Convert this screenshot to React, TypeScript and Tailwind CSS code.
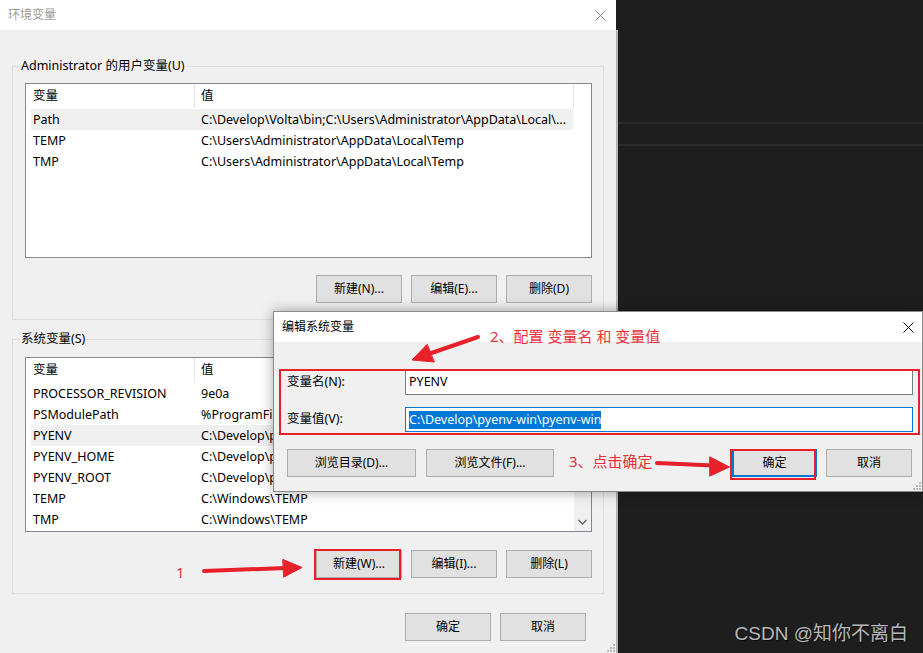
import React from "react";

const FONT = "font-['Noto_Sans','Noto_Sans_CJK_SC',sans-serif]";
const RED = "#e8202a";

type Row = [string, string];

const userRows: Row[] = [
  ["Path", String.raw`C:\Develop\Volta\bin;C:\Users\Administrator\AppData\Local\...`],
  ["TEMP", String.raw`C:\Users\Administrator\AppData\Local\Temp`],
  ["TMP", String.raw`C:\Users\Administrator\AppData\Local\Temp`],
];

const sysRows: Row[] = [
  ["PROCESSOR_REVISION", "9e0a"],
  ["PSModulePath", String.raw`%ProgramFiles%\WindowsPowerShell\Modules;C:\Windows\system32`],
  ["PYENV", String.raw`C:\Develop\pyenv-win\pyenv-win`],
  ["PYENV_HOME", String.raw`C:\Develop\pyenv-win\pyenv-win`],
  ["PYENV_ROOT", String.raw`C:\Develop\pyenv-win\pyenv-win`],
  ["TEMP", String.raw`C:\Windows\TEMP`],
  ["TMP", String.raw`C:\Windows\TEMP`],
];

function Btn({ children, className = "" }: { children: React.ReactNode; className?: string }) {
  return (
    <div
      className={`h-[28px] flex items-center justify-center border border-[#adadad] bg-[#e1e1e1] text-[12px] text-black ${className}`}
    >
      {children}
    </div>
  );
}

function CloseX({ color }: { color: string }) {
  return (
    <svg width="11" height="11" viewBox="0 0 11 11">
      <path d="M0.5 0.5 L10.5 10.5 M10.5 0.5 L0.5 10.5" stroke={color} strokeWidth="1" />
    </svg>
  );
}

function Grip() {
  return (
    <svg width="8" height="8" viewBox="0 0 8 8">
      <rect x="6" y="0" width="2" height="2" fill="#b8b8b8" />
      <rect x="3" y="3" width="2" height="2" fill="#b8b8b8" />
      <rect x="6" y="3" width="2" height="2" fill="#b8b8b8" />
      <rect x="0" y="6" width="2" height="2" fill="#b8b8b8" />
      <rect x="3" y="6" width="2" height="2" fill="#b8b8b8" />
      <rect x="6" y="6" width="2" height="2" fill="#b8b8b8" />
    </svg>
  );
}

function ListView({ rows, selected, scroll }: { rows: Row[]; selected: number; scroll?: boolean }) {
  return (
    <div className="h-[175px] border border-[#828790] bg-white flex">
      <div className="flex-1 min-w-0 flex flex-col">
        <div className="h-[24px] flex text-[12.5px] shrink-0">
          <div className="w-[169px] pl-[7px] pt-[1px] flex items-center border-r border-[#e5e5e5]">变量</div>
          <div className="w-[379px] pl-[6px] pt-[1px] flex items-center border-r border-[#e5e5e5]">值</div>
        </div>
        <div className="mt-[1px] flex flex-col">
          {rows.map(([k, v], i) => (
            <div
              key={k}
              className={`ml-[5px] w-[542px] h-[21px] pt-[1px] flex items-center text-[12.5px] ${i === selected ? "bg-[#f0f0f0]" : ""}`}
            >
              <div className="w-[163px] pl-[2px] whitespace-nowrap overflow-hidden">{k}</div>
              <div className="flex-1 min-w-0 pl-[7px] whitespace-nowrap overflow-hidden">{v}</div>
            </div>
          ))}
        </div>
      </div>
      {scroll && (
        <div className="w-[17px] bg-[#f0f0f0] flex flex-col justify-between items-center py-[6px]">
          <svg width="9" height="6" viewBox="0 0 9 6">
            <path d="M0.5 5 L4.5 1 L8.5 5" stroke="#606060" strokeWidth="1.3" fill="none" />
          </svg>
          <svg width="9" height="6" viewBox="0 0 9 6">
            <path d="M0.5 1 L4.5 5 L8.5 1" stroke="#606060" strokeWidth="1.3" fill="none" />
          </svg>
        </div>
      )}
    </div>
  );
}

function Group({
  title,
  rows,
  selected,
  scroll,
  buttons,
  className = "",
}: {
  title: string;
  rows: Row[];
  selected: number;
  scroll?: boolean;
  buttons: string[];
  className?: string;
}) {
  return (
    <fieldset className={`w-[592px] border border-[#dcdcdc] pl-[12px] pr-[11px] ${className}`}>
      <legend className="-ml-[5px] px-[1px] text-[12.5px] leading-[16px]">{title}</legend>
      <ListView rows={rows} selected={selected} scroll={scroll} />
      <div className={`flex justify-end gap-[9px] ${scroll ? "mt-[18px]" : "mt-[17px]"}`}>
        {buttons.map((b) => (
          <Btn key={b} className="w-[86px]">
            {b}
          </Btn>
        ))}
      </div>
    </fieldset>
  );
}

function Dialog() {
  return (
    <div className="absolute left-[273px] top-[311px] w-[650px] h-[181px] border border-[#8a8a8a] bg-[#f0f0f0] flex flex-col shadow-[0_0_12px_rgba(0,0,0,0.35)]">
      <div className="h-[30px] bg-white flex items-center justify-between pl-[8px] pr-[8px] shrink-0">
        <span className="text-[12px] text-black">编辑系统变量</span>
        <CloseX color="#000" />
      </div>
      <div className="flex-1 flex flex-col pl-[13px] pr-[9px] pt-[28px] relative">
        <div className="flex items-center h-[25px]">
          <div className="w-[118px] text-[12.5px]">变量名(N):</div>
          <div className="flex-1 h-full border border-[#7a7a7a] bg-white flex items-center pl-[3px] text-[12.5px]">
            PYENV
          </div>
        </div>
        <div className="flex items-center h-[25px] mt-[12px]">
          <div className="w-[118px] text-[12.5px]">变量值(V):</div>
          <div className="flex-1 h-full border border-[#0078d7] bg-white flex items-center pl-[3px] text-[12.5px]">
            <span className="bg-[#0078d7] text-white leading-[18px]">{String.raw`C:\Develop\pyenv-win\pyenv-win`}</span>
          </div>
        </div>
        <div className="flex items-center mt-[17px] pr-[1px]">
          <Btn className="w-[129px]">浏览目录(D)...</Btn>
          <Btn className="w-[128px] ml-[10px]">浏览文件(F)...</Btn>
          <div className="flex-1" />
          <div className="w-[85px] h-[28px] flex items-center justify-center border-2 border-[#0078d7] bg-[#e1e1e1] text-[12px]">
            确定
          </div>
          <Btn className="w-[86px] ml-[9px]">取消</Btn>
        </div>
        <div className="absolute right-[1px] bottom-[1px]">
          <Grip />
        </div>
      </div>
    </div>
  );
}

function Arrows() {
  return (
    <svg className="absolute inset-0 pointer-events-none" width="923" height="653" viewBox="0 0 923 653">
      <g fill={RED} stroke={RED} strokeLinecap="round">
        {/* 1 */}
        <path d="M204 571 L286 568" strokeWidth="4" />
        <polygon points="283,559.5 302,567.5 284,577" strokeWidth="1" />
        {/* 2 */}
        <path d="M478 337 L430 353.5" strokeWidth="4" />
        <polygon points="427,344.5 412,360 434,362" strokeWidth="1" />
        {/* 3 */}
        <path d="M657 463 L713 465.5" strokeWidth="4" />
        <polygon points="710,457 729.5,467 710,476" strokeWidth="1" />
      </g>
    </svg>
  );
}

export default function App() {
  return (
    <div className={`relative w-[923px] h-[653px] overflow-hidden bg-[#1e1e1e] flex ${FONT} text-black`}>
      {/* main window */}
      <div className="w-[618px] h-full flex flex-col shrink-0">
        <div className="w-[616px] h-[30px] bg-white flex items-center justify-between pl-[8px] pr-[10px] shrink-0">
          <span className="text-[12px] text-[#9a9a9a]">环境变量</span>
          <CloseX color="#8a8a8a" />
        </div>
        <div className="flex-1 bg-[#f0f0f0] border-r-2 border-[#b4b4b4] pl-[12px] relative">
          <Group
            className="mt-[28px] pt-[9px] pb-[16px]"
            title="Administrator 的用户变量(U)"
            rows={userRows}
            selected={0}
            buttons={["新建(N)...", "编辑(E)...", "删除(D)"]}
          />
          <Group
            className="mt-[11px] pt-[10px] pb-[15px]"
            title="系统变量(S)"
            rows={sysRows}
            selected={2}
            scroll
            buttons={["新建(W)...", "编辑(I)...", "删除(L)"]}
          />
          <div className="flex justify-end gap-[9px] mt-[19px] w-[574px]">
            <Btn className="w-[86px]">确定</Btn>
            <Btn className="w-[86px]">取消</Btn>
          </div>
          <div className="absolute right-[1px] bottom-[1px]">
            <Grip />
          </div>
        </div>
      </div>

      {/* dark side pane */}
      <div className="flex-1 flex flex-col">
        <div className="h-[122px]" />
        <div className="h-[2px] bg-[#2c2c2c]" />
        <div className="h-[20px]" />
        <div className="h-[2px] bg-[#2c2c2c]" />
        <div className="flex-1" />
        <div className="text-right pr-[15px] pb-[7px] text-[19px] leading-[24px] text-[#b8b8b8] font-['Liberation_Sans','Noto_Sans_CJK_SC',sans-serif] [text-shadow:1px_1px_1px_rgba(0,0,0,0.6)]">
          CSDN @知你不离白
        </div>
      </div>

      <Dialog />

      {/* annotations */}
      <div className="absolute left-[314px] top-[549px] w-[87px] h-[31px] border-2 border-[#e8202a]" />
      <div className="absolute left-[279px] top-[369px] w-[641px] h-[66px] border-2 border-[#e8202a]" />
      <div className="absolute left-[730px] top-[449px] w-[86px] h-[31px] border-2 border-[#e8202a]" />
      <div className="absolute left-[176px] top-[561px] text-[15px] leading-[22px] text-[#ee2e38]">1</div>
      <div className="absolute left-[490px] top-[325px] text-[15px] leading-[22px] text-[#ee2e38] whitespace-nowrap">
        2、配置 变量名 和 变量值
      </div>
      <div className="absolute left-[569px] top-[450px] text-[15px] leading-[22px] text-[#ee2e38] whitespace-nowrap">
        3、点击确定
      </div>
      <Arrows />
    </div>
  );
}
